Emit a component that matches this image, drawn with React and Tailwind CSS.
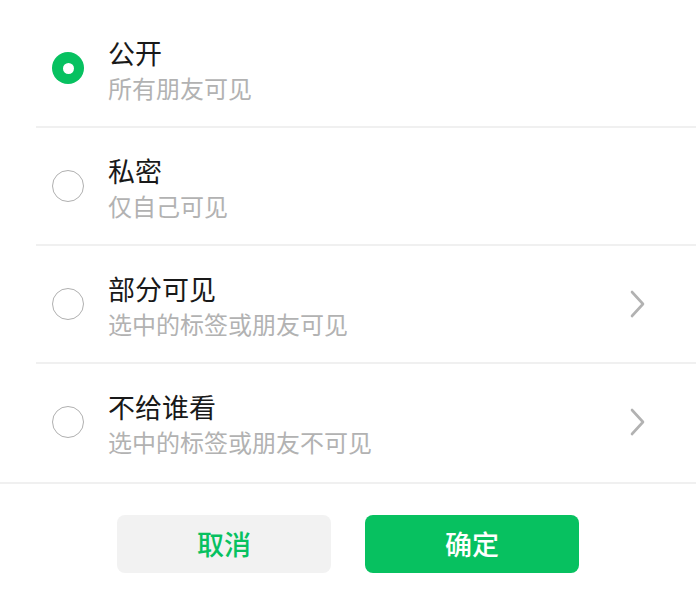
import React, { useState } from "react";

const options = [
  { id: "public", title: "公开", desc: "所有朋友可见", arrow: false },
  { id: "private", title: "私密", desc: "仅自己可见", arrow: false },
  { id: "partial", title: "部分可见", desc: "选中的标签或朋友可见", arrow: true },
  { id: "exclude", title: "不给谁看", desc: "选中的标签或朋友不可见", arrow: true },
];

const Radio = ({ checked }) =>
  checked ? (
    <div className="w-8 h-8 rounded-full bg-[#07c160] flex items-center justify-center shrink-0">
      <div className="w-[11px] h-[11px] rounded-full bg-white" />
    </div>
  ) : (
    <div className="w-8 h-8 rounded-full border-[1.5px] border-[#b0b0b0] shrink-0" />
  );

const Chevron = () => (
  <svg width="16" height="28" viewBox="0 0 16 28" className="shrink-0">
    <path d="M3 2 L14 14 L3 26" fill="none" stroke="#b2b2b2" strokeWidth="2.6" strokeLinecap="round" strokeLinejoin="round" />
  </svg>
);

const App = () => {
  const [selected, setSelected] = useState("public");

  return (
    <div className="w-[696px] h-[600px] bg-white flex flex-col font-['Noto_Sans_CJK_SC',sans-serif]">
      <div className="pt-[10px]">
        {options.map((opt) => (
          <div key={opt.id} className="pl-9">
            <div
              onClick={() => setSelected(opt.id)}
              className="h-[116px] flex items-center pl-4 pr-[51px] cursor-pointer"
            >
              <Radio checked={selected === opt.id} />
              <div className="ml-6 flex-1 pt-[4px]">
                <div className="text-[27px] leading-[36px] text-[#191919]">{opt.title}</div>
                <div className="text-[24px] leading-[34px] text-[#b2b2b2]">{opt.desc}</div>
              </div>
              {opt.arrow && <Chevron />}
            </div>
            {opt.id !== "exclude" && <div className="h-[2px] bg-[#f0f0f0]" />}
          </div>
        ))}
      </div>
      <div className="h-[2px] bg-[#f0f0f0] mt-[2px]" />
      <div className="flex justify-center gap-[34px] pt-[31px]">
        <button className="w-[214px] h-[58px] rounded-lg bg-[#f2f2f2] text-[#07c160] text-[27px] font-medium">
          取消
        </button>
        <button className="w-[214px] h-[58px] rounded-lg bg-[#07c160] text-white text-[27px] font-medium">
          确定
        </button>
      </div>
    </div>
  );
};

export default App;
